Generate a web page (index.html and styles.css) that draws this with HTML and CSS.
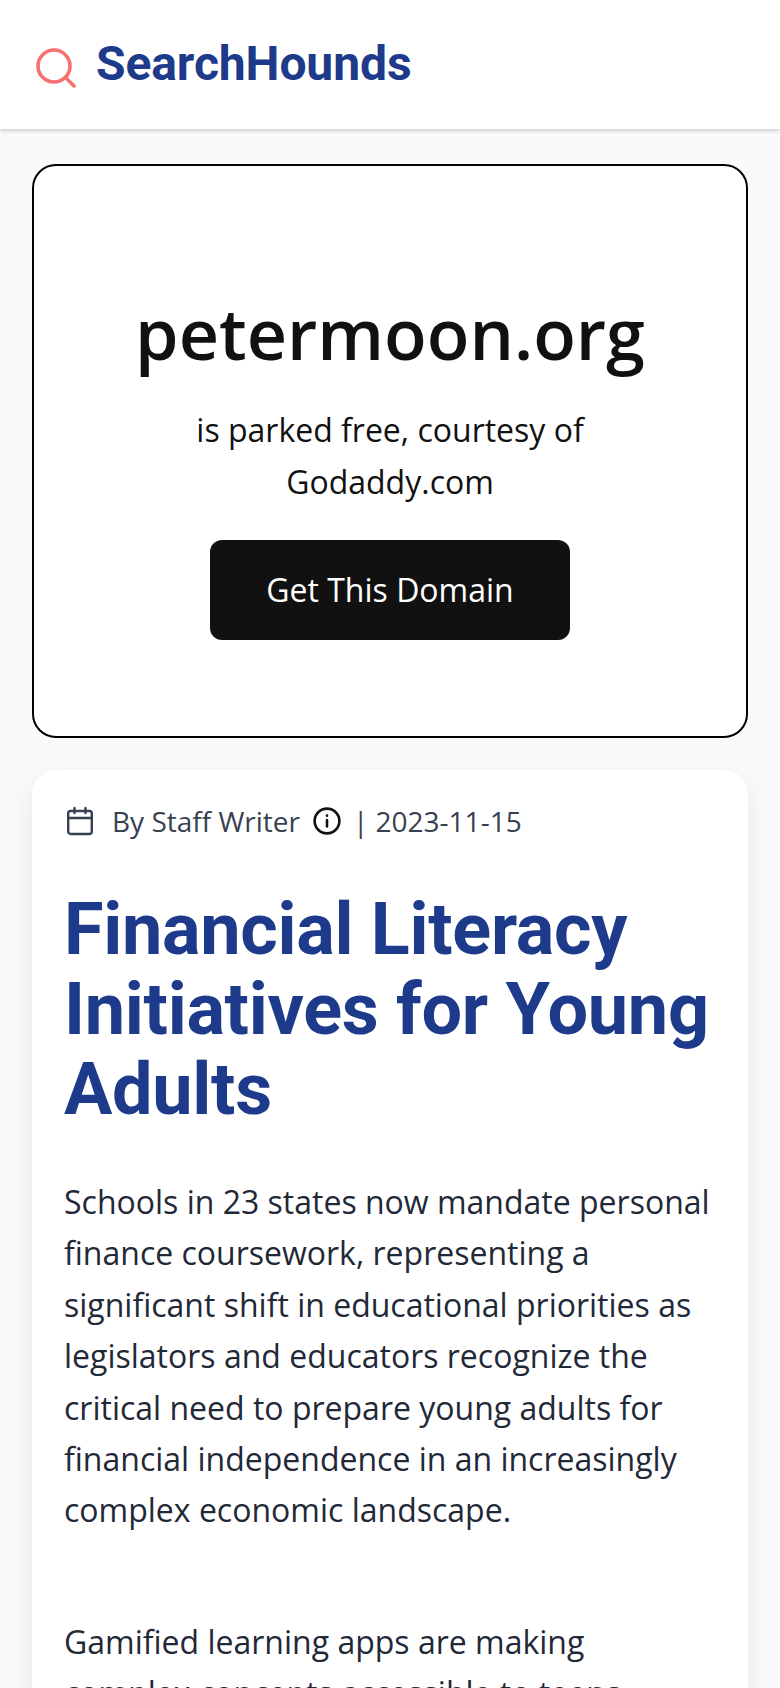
FILE: index.html
```html
<!DOCTYPE html>
<html lang="en">
<head>
  <meta charset="UTF-8">
  <meta name="viewport" content="width=device-width, initial-scale=1.0">
  <title>petermoon.org - SearchHounds</title>
  <link rel="stylesheet" href="styles.css">
</head>
<body>
<header class="site-header">
  <svg class="logo-icon" viewBox="0 0 40 40" fill="none" stroke="#f87171" stroke-width="3.6" stroke-linecap="round">
    <circle cx="18" cy="18" r="16"></circle>
    <path d="M31 31l7 7"></path>
  </svg>
  <span class="logo-text">SearchHounds</span>
</header>

<main class="content">
  <section class="parked">
    <h1>petermoon.org</h1>
    <p>is parked free, courtesy of<br>Godaddy.com</p>
    <a class="buy-btn" href="#">Get This Domain</a>
  </section>

  <article class="article">
    <div class="meta">
      <svg class="meta-cal" viewBox="0 0 28 30" fill="none" stroke="#374151" stroke-width="2.4" stroke-linecap="round" stroke-linejoin="round">
        <rect x="2.200" y="5" width="23.600" height="23" rx="2.500"></rect>
        <path d="M2.200 12h23.600M8.500 2v5M19.500 2v5"></path>
      </svg>
      <span class="meta-by">By Staff Writer</span>
      <svg class="meta-info" viewBox="0 0 26 26" fill="none" stroke="#111" stroke-width="2.4" stroke-linecap="round">
        <circle cx="13" cy="13" r="11.500"></circle>
        <path d="M13 12v6M13 8v.2"></path>
      </svg>
      <span class="meta-date">| 2023-11-15</span>
    </div>
    <h2>Financial Literacy Initiatives for Young Adults</h2>
    <p>Schools in 23 states now mandate personal finance coursework, representing a significant shift in educational priorities as legislators and educators recognize the critical need to prepare young adults for financial independence in an increasingly complex economic landscape.</p>
    <p>Gamified learning apps are making complex concepts accessible to teens</p>
  </article>
</main>
</body>
</html>
```

FILE: styles.css
```css
html, body {
  margin: 0;
  height: 1688px;
  overflow: hidden;
}
body {
  font-family: "Open Sans", sans-serif;
  background-color: #f8fafc;
  color: #111827;
}
.site-header {
  display: flex;
  align-items: center;
  gap: 20px;
  height: 129px;
  padding: 0 36px;
  background-color: #fff;
  box-shadow: 0 2px 4px rgba(0, 0, 0, 0.18);
}
.logo-icon {
  width: 40px;
  height: 40px;
  margin-top: 6px;
}
.logo-text {
  padding-bottom: 3px;
  font-family: Roboto, sans-serif;
  font-weight: 700;
  font-size: 48px;
  letter-spacing: -0.1px;
  color: #1e3a8a;
}
.content {
  padding: 35px 32px 0;
}
.parked {
  display: flex;
  flex-direction: column;
  align-items: center;
  box-sizing: border-box;
  height: 574px;
  padding-top: 129px;
  background-color: #fff;
  border: 2px solid #000;
  border-radius: 24px;
  text-align: center;
}
.parked h1 {
  margin: 0 0 33px;
  font-size: 70px;
  line-height: 76px;
  font-weight: 600;
  color: #111;
}
.parked p {
  margin: 0 0 32px;
  font-size: 32px;
  line-height: 52px;
  color: #111;
}
.buy-btn {
  display: block;
  width: 360px;
  height: 100px;
  line-height: 100px;
  background-color: #111;
  border-radius: 12px;
  color: #fff;
  font-size: 32px;
  text-decoration: none;
}
.article {
  margin-top: 32px;
  padding: 31px 32px 32px;
  background-color: #fff;
  border-radius: 24px;
  box-shadow: 0 10px 30px rgba(0, 0, 0, 0.08);
}
.meta {
  display: flex;
  align-items: center;
  font-size: 28px;
  line-height: 40px;
  color: #374151;
}
.meta-cal {
  width: 28px;
  height: 30px;
  margin: 0 18px 0 2px;
}
.meta-info {
  width: 28px;
  height: 28px;
  margin: 0 12px 0 13px;
}
.article h2 {
  margin: 49px 0 46px;
  font-family: Roboto, sans-serif;
  font-weight: 700;
  font-size: 72px;
  line-height: 80px;
  letter-spacing: -0.3px;
  color: #1e3a8a;
}
.article p {
  margin: 0 0 80px;
  font-size: 32px;
  line-height: 51.400px;
  color: #1f2937;
}
```
